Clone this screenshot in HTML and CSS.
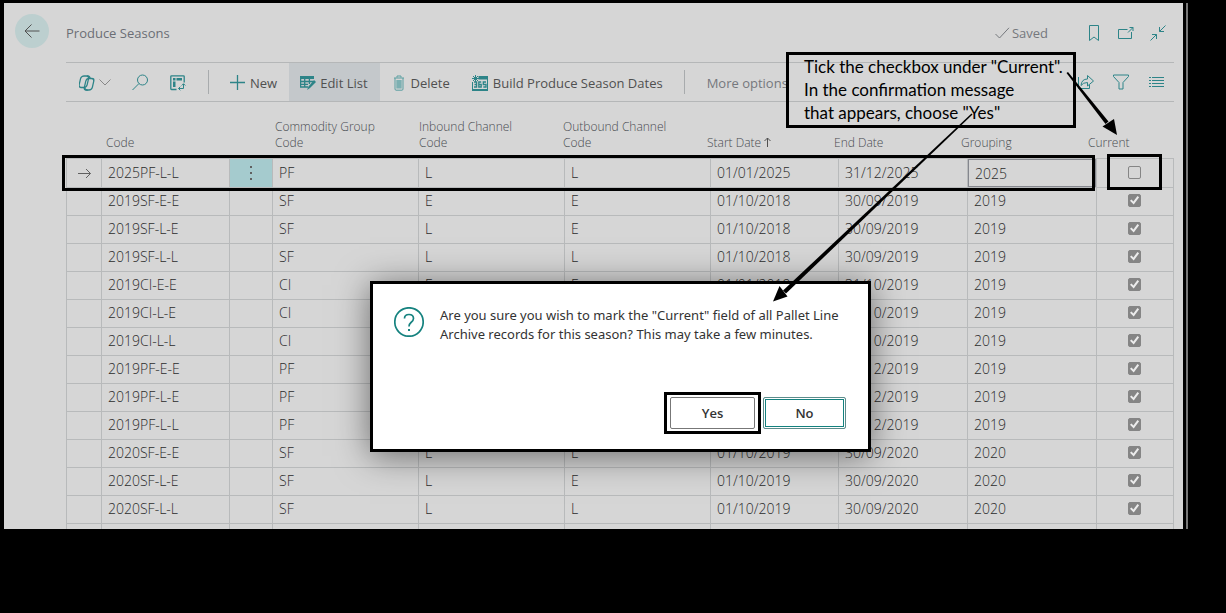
FILE: index.html
```html
<!DOCTYPE html>
<html lang="en">
<head>
<meta charset="utf-8">
<title>Produce Seasons</title>
<link rel="stylesheet" href="styles.css">
</head>
<body>
<main class="window">
  <header class="titlebar">
    <button class="back" aria-label="Back"><svg width="16" height="14" viewBox="0 0 16 14"><path d="M15.500 7H1M7.500.500 1 7l6.500 6.500"/></svg></button>
    <h1 class="title">Produce Seasons</h1>
    <span class="saved"><svg width="15" height="12" viewBox="0 0 15 12"><path d="M.500 7l4 4L14 .800"/></svg>Saved</span>
    <div class="window-tools">
      <button aria-label="Bookmark"><svg width="16" height="18" viewBox="0 0 16 18"><path d="M3.500 1.500h9v15L8 13l-4.500 3.500z"/></svg></button>
      <button aria-label="Open in new window"><svg width="16" height="16" viewBox="0 0 16 16"><path d="M9.500 4.500h-9v9h13V7M10 7.500 15 2.500M11.500 2.500H15V6"/></svg></button>
      <button aria-label="Collapse"><svg width="16" height="16" viewBox="0 0 16 16"><path d="M15.500.500 9.500 6.500M9.500 2v4.500H14M.500 15.500l6-6M2 9.500h4.500V14"/></svg></button>
    </div>
  </header>

  <nav class="commands">
    <button class="cmd copilot" aria-label="Copilot"><svg width="17" height="16" viewBox="0 0 17 16"><g class="mid"><rect x="2.400" y="1" width="8" height="11.500" rx="2.800" transform="skewX(-13)"/><rect x="8.200" y="3.500" width="8" height="11.500" rx="2.800" transform="skewX(-13)"/><path d="M8 1q2.600-.400 3.200 2.500M8.800 15q-2.800.300-3.400-2.500"/></g></svg><svg width="12" height="7" viewBox="0 0 12 7" class="chevron"><path d="M.500.500 6 6 11.500.500"/></svg></button>
    <button class="cmd search" aria-label="Search"><svg width="17" height="17" viewBox="0 0 17 17"><circle cx="10.500" cy="6" r="5"/><path d="M7 9.500.500 16"/></svg></button>
    <button class="cmd analyse" aria-label="Analyse"><svg width="16" height="16" viewBox="0 0 16 16"><path class="mid" d="M6.500 14.500h-5q-.700 0-.700-.700V1.500q0-.700.700-.700h12q.700 0 .700.700v6"/><path class="solid" d="M3 3h2.500v2.500H3zM6.500 3H12v2.500H6.500zM3 6.500h2.500V12H3z"/><path d="M13.500 9v4.500H8.500M11.700 10.500l1.800-1.800 1.800 1.800M10.300 11.700l-1.800 1.800 1.800 1.800"/></svg></button>
    <span class="divider"></span>
    <button class="cmd"><svg width="15" height="15" viewBox="0 0 15 15"><path class="mid" d="M7.500 0v15M0 7.500h15"/></svg>New</button>
    <button class="cmd edit"><svg width="16" height="16" viewBox="0 0 16 16"><path class="solid" d="M0 1h14v3H0z"/><path class="mid" d="M.600 1v11H8M4.700 3v9M9.400 3v6M.600 6.500H13M.600 9.300H8"/><path class="solid" d="M14 5l2 2-6 6-3 2 1.500-3.500z"/></svg>Edit List</button>
    <button class="cmd delete"><svg width="10" height="16" viewBox="0 0 10 16"><path class="soft-line" d="M0 3h10M3 2.500V1h4v1.500M1 3v11q0 1.200 1 1.200h6q1 0 1-1.200V3"/><path class="soft" d="M2.300 5h5.400v8.500H2.300z"/></svg>Delete</button>
    <button class="cmd"><svg width="16" height="16" viewBox="0 0 16 16"><path class="solid" d="M6.500 1H16v3.500H6.500zM0 14h16v2H0z"/><path d="M.500 7v8M15.500 3v12M3.500 0v7M0 3.500h7M1 1l5 5M6 1 1 6"/><path class="mid" d="M2 7h2.600v5H2M2.500 9.500h2M9.200 7H6.800v5h2.400V9.500H6.800M14 7h-2.700v2.500H14V12h-2.700"/></svg>Build Produce Season Dates</button>
    <span class="divider"></span>
    <button class="cmd more">More options</button>
    <div class="view-tools">
      <button aria-label="Share"><svg width="16" height="16" viewBox="0 0 16 16"><path d="M.500 3v11.500h11V11M3 11.500Q3.500 5 9.500 5V1.500L15.500 7l-6 5V8.500Q5 8.500 3 11.500z"/></svg></button>
      <button aria-label="Filter"><svg width="16" height="16" viewBox="0 0 16 16"><path d="M.500 1h15v1.500L10 8.500v6.500H6V8.500L.500 2.500z"/></svg></button>
      <button aria-label="List"><svg width="15" height="12" viewBox="0 0 15 12"><path d="M0 1.500h2M3 1.500h12M0 4.500h2M3 4.500h12M0 7.500h2M3 7.500h12M0 10.500h2M3 10.500h12"/></svg></button>
    </div>
  </nav>

  <table class="grid">
    <thead>
      <tr><td></td><th>Code</th><th>Commodity Group<br>Code</th><th>Inbound Channel<br>Code</th><th>Outbound Channel<br>Code</th><th>Start Date <svg width="7" height="10" viewBox="0 0 7 10"><path d="M3.500 10V1M.500 4l3-3 3 3"/></svg></th><th>End Date</th><th>Grouping</th><th>Current</th></tr>
    </thead>
    <tbody>
      <tr><td class="marker"><svg width="13" height="11" viewBox="0 0 13 11"><path d="M0 5.500h12.500M8 1l4.500 4.500L8 10"/></svg></td><td>2025PF-L-L</td><td class="menu"><button aria-label="Row menu"><svg width="2" height="14" viewBox="0 0 2 14"><path class="dots" d="M0 0h2v2H0zM0 6h2v2H0zM0 12h2v2H0z"/></svg></button></td><td>PF</td><td>L</td><td>L</td><td>01/01/2025</td><td>31/12/2025</td><td class="editing"><input type="text" value="2025" aria-label="Grouping"></td><td class="tick"><input type="checkbox" aria-label="Current"></td></tr>
      <tr><td></td><td>2019SF-E-E</td><td></td><td>SF</td><td>E</td><td>E</td><td>01/10/2018</td><td>30/09/2019</td><td>2019</td><td class="tick"><input type="checkbox" aria-label="Current" checked></td></tr>
      <tr><td></td><td>2019SF-L-E</td><td></td><td>SF</td><td>L</td><td>E</td><td>01/10/2018</td><td>30/09/2019</td><td>2019</td><td class="tick"><input type="checkbox" aria-label="Current" checked></td></tr>
      <tr><td></td><td>2019SF-L-L</td><td></td><td>SF</td><td>L</td><td>L</td><td>01/10/2018</td><td>30/09/2019</td><td>2019</td><td class="tick"><input type="checkbox" aria-label="Current" checked></td></tr>
      <tr><td></td><td>2019CI-E-E</td><td></td><td>CI</td><td>E</td><td>E</td><td>01/01/2019</td><td>31/10/2019</td><td>2019</td><td class="tick"><input type="checkbox" aria-label="Current" checked></td></tr>
      <tr><td></td><td>2019CI-L-E</td><td></td><td>CI</td><td></td><td></td><td></td><td>31/10/2019</td><td>2019</td><td class="tick"><input type="checkbox" aria-label="Current" checked></td></tr>
      <tr><td></td><td>2019CI-L-L</td><td></td><td>CI</td><td></td><td></td><td></td><td>31/10/2019</td><td>2019</td><td class="tick"><input type="checkbox" aria-label="Current" checked></td></tr>
      <tr><td></td><td>2019PF-E-E</td><td></td><td>PF</td><td></td><td></td><td></td><td>31/12/2019</td><td>2019</td><td class="tick"><input type="checkbox" aria-label="Current" checked></td></tr>
      <tr><td></td><td>2019PF-L-E</td><td></td><td>PF</td><td></td><td></td><td></td><td>31/12/2019</td><td>2019</td><td class="tick"><input type="checkbox" aria-label="Current" checked></td></tr>
      <tr><td></td><td>2019PF-L-L</td><td></td><td>PF</td><td></td><td></td><td></td><td>31/12/2019</td><td>2019</td><td class="tick"><input type="checkbox" aria-label="Current" checked></td></tr>
      <tr><td></td><td>2020SF-E-E</td><td></td><td>SF</td><td>L</td><td>L</td><td>01/10/2019</td><td>30/09/2020</td><td>2020</td><td class="tick"><input type="checkbox" aria-label="Current" checked></td></tr>
      <tr><td></td><td>2020SF-L-E</td><td></td><td>SF</td><td>L</td><td>E</td><td>01/10/2019</td><td>30/09/2020</td><td>2020</td><td class="tick"><input type="checkbox" aria-label="Current" checked></td></tr>
      <tr><td></td><td>2020SF-L-L</td><td></td><td>SF</td><td>L</td><td>L</td><td>01/10/2019</td><td>30/09/2020</td><td>2020</td><td class="tick"><input type="checkbox" aria-label="Current" checked></td></tr>
      <tr><td></td><td></td><td></td><td></td><td></td><td></td><td></td><td></td><td></td><td></td></tr>
    </tbody>
  </table>

  <section class="dialog" role="dialog" aria-label="Confirm">
    <div class="question">
      <svg width="30" height="30" viewBox="0 0 30 30"><circle cx="15" cy="15" r="14.200"/><path d="M10.500 11.500Q10.500 7.500 15 7.500t4.500 4q0 2-2.500 4-2 1.700-2 4"/><path class="dot" d="M14 22h2v2h-2z"/></svg>
      <p>Are you sure you wish to mark the "Current" field of all Pallet Line Archive records for this season? This may take a few minutes.</p>
    </div>
    <div class="actions">
      <div class="highlight"><button class="yes">Yes</button></div>
      <button class="no">No</button>
    </div>
  </section>

  <div class="frame row-frame"></div>
  <div class="frame tick-frame"></div>
  <div class="frame callout">Tick the checkbox under "Current".<br>In the confirmation message<br>that appears, choose "Yes"</div>
  <svg class="arrows" width="1179" height="526" viewBox="4 3 1179 526">
    <path d="M1066.500 73l1.500-1 40.500 49.500-3 2.500z"/>
    <path d="M1102.500 126.500l11.500-7.500 3 16z"/>
    <path d="M971.500 113.500l1 1L786 293.500l-3-3z"/>
    <path d="M773 301.500l6.500-15.500 8 10.500z"/>
  </svg>
</main>
</body>
</html>
```
FILE: styles.css
```css
* { box-sizing: border-box; }

body {
  margin: 0;
  height: 100vh;
  padding: 3px 43px 84px 4px;
  display: flex;
  background: #000;
  font: 13px/16px "Open Sans", "Noto Sans", sans-serif;
  color: #505050;
}

button {
  border: 0;
  padding: 0;
  background: none;
  font: inherit;
  color: inherit;
}

svg { flex: none; fill: none; stroke: #2d8488; stroke-width: 1; }
.mid { stroke-width: 1.3; }
.solid { fill: #2d8488; stroke: none; }
.soft { fill: #7db0b2; stroke: none; }
.soft-line { stroke: #5b9fa1; }

.window {
  flex: 1;
  min-width: 0;
  position: relative;
  display: flex;
  flex-direction: column;
  overflow: hidden;
  background: #d6d6d6;
  box-shadow: 3px 0 0 #000, 5px 0 0 #777;
}

.titlebar {
  display: flex;
  align-items: center;
  height: 59px;
  flex: none;
  padding: 0 17px 0 11px;
}
.back {
  width: 34px;
  height: 34px;
  margin-bottom: 4px;
  display: grid;
  place-items: center;
  border-radius: 50%;
  background: #bccfcf;
}
.back svg { stroke: #505050; }
.title { margin: 0 auto 0 17px; font-size: 13px; font-weight: 400; color: #6b6e75; }
.saved { display: flex; align-items: center; gap: 2px; color: #75787d; }
.saved svg { stroke: #75787d; }
.window-tools { display: flex; gap: 16px; margin-left: 38px; }
.window-tools button, .view-tools button { display: grid; place-items: center; width: 16px; height: 18px; }

.commands {
  display: flex;
  align-items: center;
  flex: none;
  height: 40px;
  margin: 0 9px 0 62px;
  border: solid #b5b7b8;
  border-width: 1px 0;
}
.cmd { display: flex; align-items: center; height: 100%; padding: 1px 11px 0; gap: 5px; white-space: nowrap; }
.copilot { gap: 3px; padding-left: 13px; padding-right: 10px; }
.chevron { stroke: #888; }
.analyse { padding-left: 10px; padding-right: 12px; }
.edit { margin-left: 1px; padding-right: 12px; background: #c4c8cb; gap: 4px; }
.delete { padding-left: 14px; gap: 7px; }
.more { padding-left: 12px; color: #75787d; }
.divider { width: 1px; height: 24px; margin: 0 10px; background: #a8abad; }
.view-tools { display: flex; gap: 19px; margin-left: auto; padding-right: 10px; }

.grid { display: block; margin: 0 9px 0 62px; }
.grid thead, .grid tbody { display: block; }
.grid tr { display: grid; }
.grid thead tr {
  grid-template-columns: 40fr 169fr 144fr 144fr 144fr 127fr 127fr 127fr 86fr;
  height: 56px;
  padding-bottom: 7px;
  align-items: end;
}
.grid thead td, .grid th { padding: 0; }
.grid th { text-align: left; font-weight: 300; font-size: 12px; line-height: 16px; color: #484b50; white-space: nowrap; }
.grid th svg { stroke: #505050; }
.grid tbody { border-left: 1px solid #b8babb; border-top: 1px solid #b8babb; font-size: 14px; font-weight: 300; color: #2b2b2b; }
.grid tbody tr { grid-template-columns: 35fr 128fr 43fr 146fr 146fr 146fr 128fr 129fr 129fr 77fr; height: 28px; }
.grid tbody td {
  padding: 0 6px;
  border: solid #b8babb;
  border-width: 0 1px 1px 0;
  line-height: 28px;
  min-width: 0;
}
.grid tbody td.marker, .grid tbody td.tick { display: grid; place-items: center; padding: 0; }
.grid tbody td.tick { padding: 0 1px 1px 0; }
.marker svg { stroke: #606060; }
.grid tbody td.menu { padding: 0; background: #a5cbce; }
.menu button { display: grid; place-items: center; width: 100%; height: 100%; }
.dots { fill: #606060; stroke: none; }
.grid tbody td.editing { padding: 0; }
.editing input {
  display: block;
  width: 100%;
  height: 100%;
  border: 1px solid #85878e;
  padding: 0 6px;
  background: none;
  font: inherit;
  color: inherit;
}
.tick input {
  appearance: none;
  display: block;
  width: 13px;
  height: 13px;
  margin: 0;
  border: 1px solid #858585;
  border-radius: 2px;
}
.tick input:checked { background: #858585; }
.tick input:checked::before {
  content: "";
  display: block;
  width: 11px;
  height: 11px;
  background: #ebebeb;
  clip-path: polygon(9% 52%, 23% 40%, 40% 58%, 77% 9%, 92% 21%, 43% 86%);
}

.dialog {
  position: absolute;
  left: 366px;
  top: 278px;
  width: 501px;
  height: 171px;
  display: flex;
  flex-direction: column;
  justify-content: space-between;
  padding: 22px 22px 15px 21px;
  border: 3px solid #000;
  background: #fff;
  box-shadow: 0 4px 32px rgba(0, 0, 0, .5);
  color: #333;
}
.question { display: flex; align-items: flex-start; gap: 16px; }
.question svg { margin-top: 1px; stroke: #15827f; stroke-width: 1.700; }
.question .dot { fill: #15827f; stroke: none; }
.question p { margin: 0; font-family: "Noto Sans", "Open Sans", sans-serif; line-height: 19px; }
.actions { display: flex; justify-content: flex-end; align-items: center; gap: 2px; }
.highlight { border: 3px solid #000; padding: 2px 3px; }
.actions button { height: 32px; font-weight: 600; }
.yes { width: 85px; border: 1px solid #777; border-radius: 2px; }
.no { width: 83px; border: 1px solid #5c8c8b; border-radius: 2px; box-shadow: inset 0 0 0 1px #fff, inset 0 0 0 2px #15827f; }

.frame { position: absolute; border: 3px solid #000; }
.row-frame { left: 58px; right: 88px; top: 152px; height: 36px; }
.tick-frame { right: 21px; top: 151px; width: 55px; height: 36px; }
.callout {
  right: 107px;
  top: 49px;
  width: 290px;
  height: 76px;
  padding-left: 15px;
  font: 17px/23px Lato, sans-serif;
  color: #000;
  white-space: nowrap;
}
.arrows { position: absolute; top: 0; right: 0; fill: #000; stroke: none; }
```
